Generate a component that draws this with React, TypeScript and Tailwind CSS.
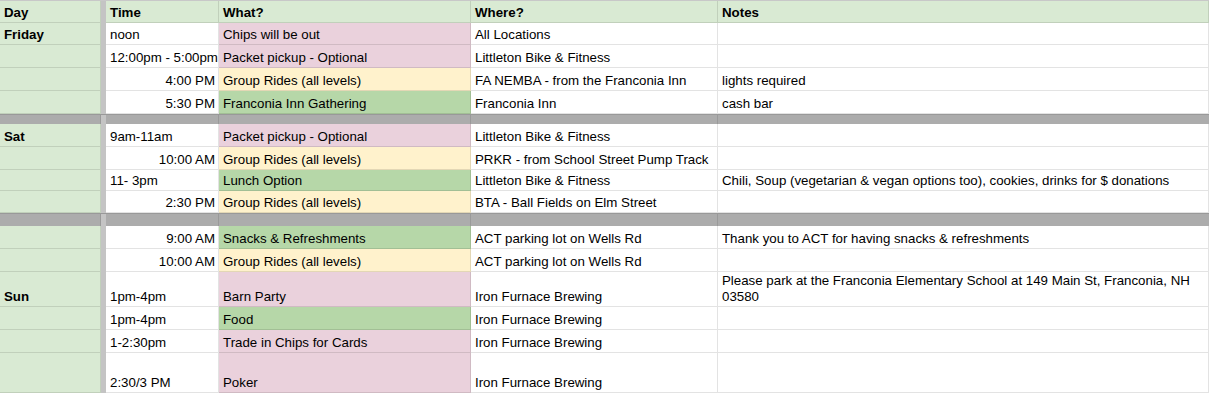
import React from "react";

type Tone = "pink" | "yellow" | "green" | "none";

interface Row {
  kind: "row";
  h: string;
  day?: string;
  time: string;
  right?: boolean;
  what: string;
  tone: Tone;
  where: string;
  notes?: React.ReactNode;
}

interface Gap {
  kind: "gap";
  h: string;
}

const tones: Record<Tone, string> = {
  pink: "bg-[#ead1dc]",
  yellow: "bg-[#fff2cc]",
  green: "bg-[#b6d7a8]",
  none: "bg-white",
};

const rows: (Row | Gap)[] = [
  { kind: "row", h: "h-[22px]", day: "Friday", time: "noon", what: "Chips will be out", tone: "pink", where: "All Locations" },
  { kind: "row", h: "h-[23px]", time: "12:00pm - 5:00pm", what: "Packet pickup - Optional", tone: "pink", where: "Littleton Bike & Fitness" },
  { kind: "row", h: "h-[23px]", time: "4:00 PM", right: true, what: "Group Rides (all levels)", tone: "yellow", where: "FA NEMBA - from the Franconia Inn", notes: "lights required" },
  { kind: "row", h: "h-[23px]", time: "5:30 PM", right: true, what: "Franconia Inn Gathering", tone: "green", where: "Franconia Inn", notes: "cash bar" },
  { kind: "gap", h: "h-[10px]" },
  { kind: "row", h: "h-[23px]", day: "Sat", time: "9am-11am", what: "Packet pickup - Optional", tone: "pink", where: "Littleton Bike & Fitness" },
  { kind: "row", h: "h-[23px]", time: "10:00 AM", right: true, what: "Group Rides (all levels)", tone: "yellow", where: "PRKR - from School Street Pump Track" },
  { kind: "row", h: "h-[21px]", time: "11- 3pm", what: "Lunch Option", tone: "green", where: "Littleton Bike & Fitness", notes: "Chili, Soup (vegetarian & vegan options too), cookies, drinks for $ donations" },
  { kind: "row", h: "h-[22px]", time: "2:30 PM", right: true, what: "Group Rides (all levels)", tone: "yellow", where: "BTA - Ball Fields on Elm Street" },
  { kind: "gap", h: "h-[13px]" },
  { kind: "row", h: "h-[23px]", time: "9:00 AM", right: true, what: "Snacks & Refreshments", tone: "green", where: "ACT parking lot on Wells Rd", notes: "Thank you to ACT for having snacks & refreshments" },
  { kind: "row", h: "h-[23px]", time: "10:00 AM", right: true, what: "Group Rides (all levels)", tone: "yellow", where: "ACT parking lot on Wells Rd" },
  {
    kind: "row",
    h: "h-[35px]",
    day: "Sun",
    time: "1pm-4pm",
    what: "Barn Party",
    tone: "pink",
    where: "Iron Furnace Brewing",
    notes: (
      <>
        Please park at the Franconia Elementary School at 149 Main St, Franconia, NH
        <br />
        03580
      </>
    ),
  },
  { kind: "row", h: "h-[23px]", time: "1pm-4pm", what: "Food", tone: "green", where: "Iron Furnace Brewing" },
  { kind: "row", h: "h-[23px]", time: "1-2:30pm", what: "Trade in Chips for Cards", tone: "pink", where: "Iron Furnace Brewing" },
  { kind: "row", h: "h-[40px]", time: "2:30/3 PM", what: "Poker", tone: "pink", where: "Iron Furnace Brewing" },
];

const grid = "grid grid-cols-[101px_5px_113px_252px_247px_1fr]";
const cell = "flex items-end px-[4px] pb-[1px] border-r border-b border-black/[0.11] leading-4 whitespace-nowrap overflow-hidden";

export default function App() {
  return (
    <div className="w-[1209px] h-[394px] overflow-hidden bg-white text-[13.3px] text-black border-t border-[#c8c8c8] font-['Liberation_Sans',Arial,sans-serif]">
      {/* header */}
      <div className={`${grid} h-[22px] bg-[#d9ead3] font-bold`}>
        <div className={cell}>Day</div>
        <div className="bg-[#c4c4c4]" />
        <div className={cell}>Time</div>
        <div className={cell}>What?</div>
        <div className={cell}>Where?</div>
        <div className={cell}>Notes</div>
      </div>

      {rows.map((r, i) =>
        r.kind === "gap" ? (
          <div key={i} className={`${grid} ${r.h} bg-[#acacac] border-t border-[#999999]`}>
            <div className="border-r border-black/10" />
            <div className="bg-[#c4c4c4]" />
            <div className="border-r border-black/10" />
            <div className="border-r border-black/10" />
            <div className="border-r border-black/10" />
            <div />
          </div>
        ) : (
          <div key={i} className={`${grid} ${r.h}`}>
            <div className={`${cell} bg-[#d9ead3] font-bold`}>{r.day}</div>
            <div className="bg-[#c4c4c4]" />
            <div className={`${cell} ${r.right ? "justify-end pr-[3px]" : ""}`}>{r.time}</div>
            <div className={`${cell} ${tones[r.tone]}`}>{r.what}</div>
            <div className={cell}>{r.where}</div>
            <div className={`${cell} whitespace-normal`}>
              <span>{r.notes}</span>
            </div>
          </div>
        )
      )}
    </div>
  );
}
